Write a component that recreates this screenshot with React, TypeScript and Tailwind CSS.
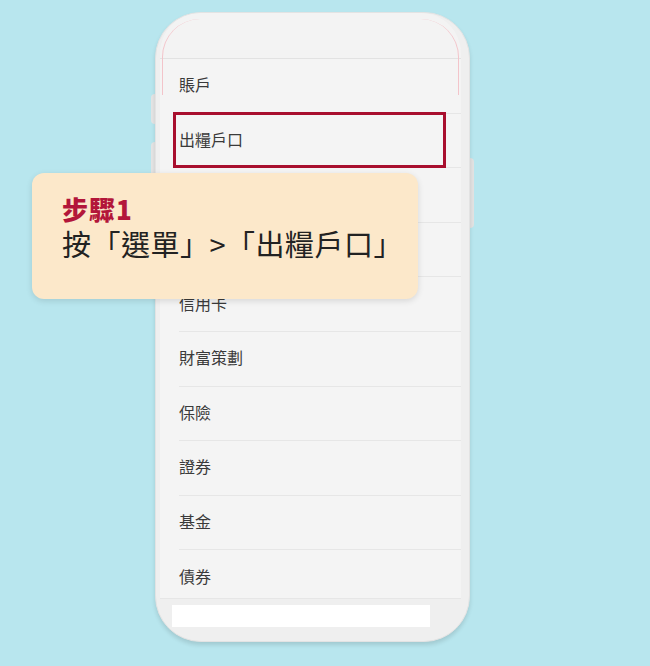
import React from "react";

const items = ["賬戶", "出糧戶口", "轉賬", "繳費", "信用卡", "財富策劃", "保險", "證券", "基金", "債券"];

export default function App() {
  return (
    <div
      className="relative w-[650px] h-[666px] overflow-hidden bg-[#b8e6ee]"
      style={{ fontFamily: '"Noto Sans CJK TC", "Noto Sans", sans-serif' }}
    >
      <div className="pt-[12px] pl-[155px]">
        <div className="relative w-[315px] h-[630px]">
          {/* side buttons */}
          <div className="absolute left-[-4px] top-[82px] w-[4px] h-[30px] rounded-l bg-[#e4e4e4]" />
          <div className="absolute left-[-4px] top-[130px] w-[4px] h-[40px] rounded-l bg-[#e4e4e4]" />
          <div className="absolute right-[-4px] top-[146px] w-[5px] h-[70px] rounded-r bg-[#e2e2e2]" />
          <div className="relative w-[315px] h-[630px] rounded-[46px] bg-[#efefef] border border-[#e3e3e3] shadow-[0_3px_4px_rgba(0,0,0,0.12)] overflow-hidden">
            <div className="ml-[4px] mr-[8px] h-[586px] rounded-t-[40px] bg-[#f3f3f3] flex flex-col relative overflow-hidden">
              <div className="absolute left-[2px] right-[2px] top-[6px] h-[76px] rounded-t-[38px] border-l border-r border-[#f3c4ca]" />
              <div className="h-[46px] shrink-0 border-b border-[#e2e2e2]" />
              <div className="flex-1 overflow-hidden bg-[#f4f4f4]">
                {items.map((t, i) => (
                  <div key={t} className="relative h-[54.6px] pl-[19px]">
                    <div className="h-full flex items-center pb-[3px] border-b border-[#e6e6e6] text-[16px] text-[#3a3a3a]">
                      {t}
                    </div>
                    {i === 1 && (
                      <div className="absolute left-[13px] top-[-2px] w-[273px] h-[56px] border-[3px] border-[#a80f2e]" />
                    )}
                  </div>
                ))}
              </div>
              <div className="h-[1px] bg-[#e6e6e6]" />
            </div>
            <div className="flex pl-[16px] pt-[6px]">
              <div className="w-[258px] h-[22px] bg-white" />
            </div>
          </div>
        </div>
      </div>

      <div className="absolute left-[32px] top-[173px] w-[386px] h-[126px] rounded-[12px] bg-[#fce8ca] shadow-[0_2px_6px_rgba(0,0,0,0.12)] pl-[30px] pt-[22px] flex flex-col gap-[3px]">
        <div className="text-[26px] leading-[28px] font-black tracking-[1px] text-[#b3163a]">步驟1</div>
        <div className="text-[29px] leading-[34px] tracking-[0.5px] text-[#222222]">按「選單」&gt;「出糧戶口」</div>
      </div>
    </div>
  );
}
